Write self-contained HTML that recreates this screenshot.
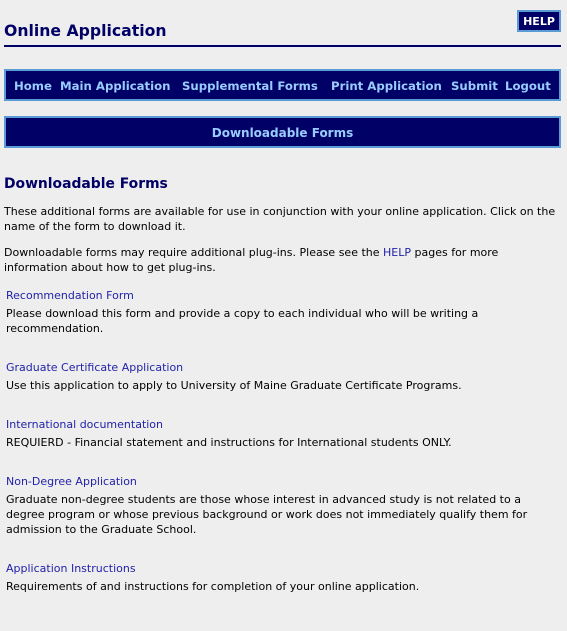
<!DOCTYPE html>
<html><head><meta charset="utf-8"><style>
body{margin:0;background:#eeeeee;width:567px;height:631px;overflow:hidden;position:relative;font-family:"DejaVu Sans","Liberation Sans",sans-serif;font-size:11px;color:#000;}
.a{position:absolute;left:4px;white-space:nowrap;line-height:15px;}
.l{color:#2222aa;left:6px}
.d{left:6px}
.box{position:absolute;left:4px;width:553px;background:#000066;border:2px solid #5b9bd5;color:#99ccff;font-weight:bold;font-size:11.7px;}
</style></head><body>
<div style="position:absolute;left:517px;top:10px;width:40px;height:18px;background:#000066;border:2px solid #5b9bd5;color:#fff;font-weight:bold;font-size:11px;line-height:19px;text-align:center;">HELP</div>
<div class="a" style="top:20px;font-size:15.7px;font-weight:bold;color:#000066;line-height:22px;">Online Application</div>
<div style="position:absolute;left:4px;top:45px;width:557px;height:2px;background:#000066"></div>
<div class="box" style="top:69px;height:28px;line-height:30px;">
<span style="position:absolute;left:8px">Home</span>
<span style="position:absolute;left:54px">Main Application</span>
<span style="position:absolute;left:176px">Supplemental Forms</span>
<span style="position:absolute;left:325px">Print Application</span>
<span style="position:absolute;left:445px">Submit</span>
<span style="position:absolute;left:499px">Logout</span>
</div>
<div class="box" style="top:116px;height:28px;line-height:31px;text-align:center;font-size:12px;">Downloadable Forms</div>
<div class="a" style="top:174px;font-size:13.9px;font-weight:bold;color:#000066;line-height:20px;">Downloadable Forms</div>
<div class="a" style="top:204px">These additional forms are available for use in conjunction with your online application. Click on the<br>name of the form to download it.</div>
<div class="a" style="top:245px">Downloadable forms may require additional plug-ins. Please see the <span style="color:#2222aa">HELP</span> pages for more<br>information about how to get plug-ins.</div>
<div class="a l" style="top:288px">Recommendation Form</div>
<div class="a d" style="top:306px">Please download this form and provide a copy to each individual who will be writing a<br>recommendation.</div>
<div class="a l" style="top:360px">Graduate Certificate Application</div>
<div class="a d" style="top:378px">Use this application to apply to University of Maine Graduate Certificate Programs.</div>
<div class="a l" style="top:417px">International documentation</div>
<div class="a d" style="top:435px">REQUIERD - Financial statement and instructions for International students ONLY.</div>
<div class="a l" style="top:474px">Non-Degree Application</div>
<div class="a d" style="top:492px">Graduate non-degree students are those whose interest in advanced study is not related to a<br>degree program or whose previous background or work does not immediately qualify them for<br>admission to the Graduate School.</div>
<div class="a l" style="top:561px">Application Instructions</div>
<div class="a d" style="top:579px">Requirements of and instructions for completion of your online application.</div>
</body></html>
